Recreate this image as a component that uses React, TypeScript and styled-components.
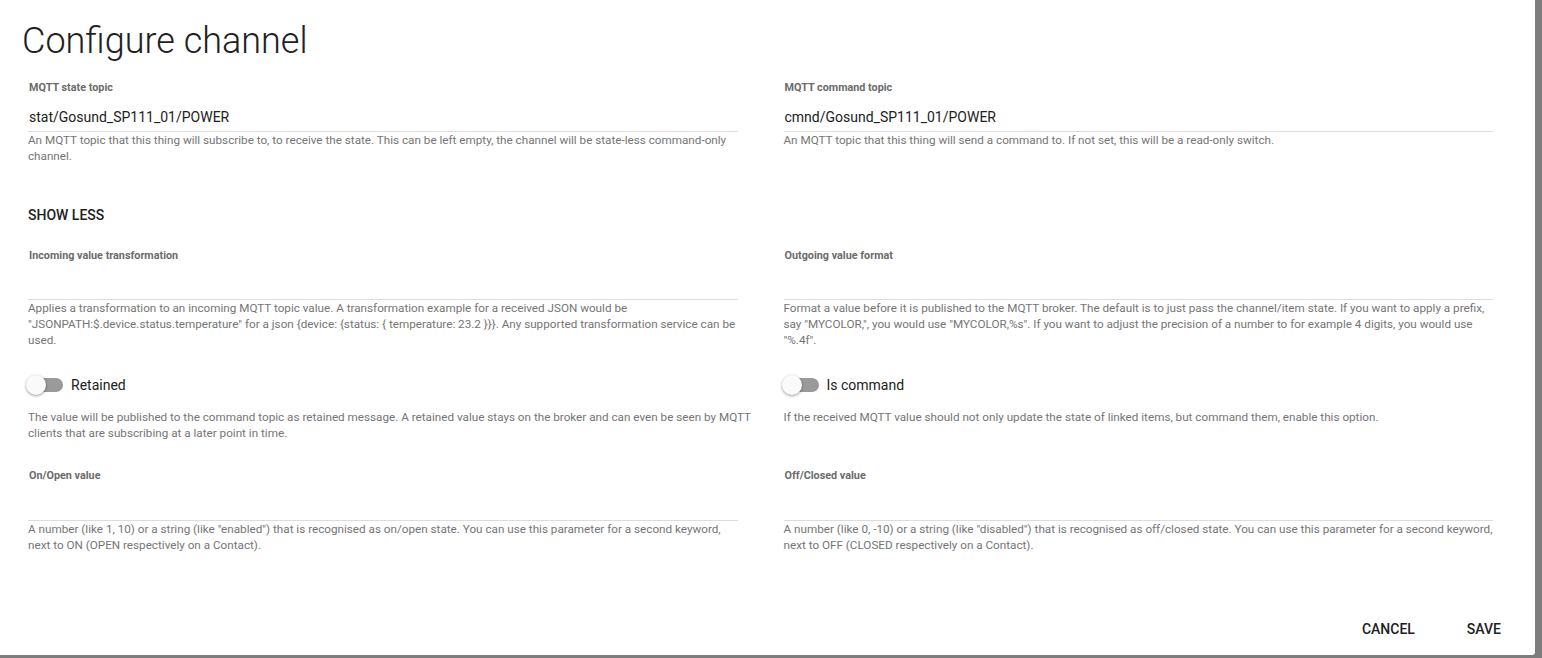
import React from "react";
import styled, { createGlobalStyle } from "styled-components";

const Global = createGlobalStyle`
  html, body { margin: 0; padding: 0; background: #7d7d7d; }
  body { font-family: Roboto, "Noto Sans", Arial, sans-serif; overflow: hidden; }
  * { box-sizing: border-box; }
`;

const Dialog = styled.div`
  width: 1535px;
  height: 655px;
  background: #fff;
  border-radius: 0 0 3px 0;
  display: flex;
  flex-direction: column;
`;

const Title = styled.h1`
  margin: 0;
  padding: 18px 0 0 22px;
  height: 76px;
  font-size: 36px;
  font-weight: 300;
  color: #212121;
  line-height: 46px;
`;

const Body = styled.div`
  padding: 0 42px 0 28px;
  flex: 1;
`;

const Grid = styled.div`
  display: grid;
  grid-template-columns: minmax(0, 1fr) minmax(0, 1fr);
  column-gap: 46px;
`;

const Field = styled.div<{ $h: number }>`
  height: ${(p) => p.$h}px;
  display: flex;
  flex-direction: column;
  min-width: 0;
`;

const Label = styled.div`
  font-size: 10.8px;
  font-weight: 700;
  color: #6b6b6b;
  line-height: 12px;
  height: 12px;
  margin-top: 6px;
  padding-left: 1px;
`;

const Input = styled.div<{ $h: number }>`
  height: ${(p) => p.$h}px;
  border-bottom: 1px solid #dcdcdc;
  font-size: 14px;
  color: #212121;
  display: flex;
  align-items: flex-end;
  padding-bottom: 6px;
  padding-left: 1px;
`;

const Desc = styled.div<{ $pr?: number }>`
  font-size: 11.7px;
  line-height: 16px;
  color: #757575;
  padding-right: ${(p) => p.$pr ?? 0}px;
`;

const ShowLess = styled.div`
  height: 38px;
  display: flex;
  align-items: center;
  font-size: 14px;
  font-weight: 500;
  color: #212121;
  margin-bottom: 10px;
`;

const ToggleRow = styled.div`
  display: flex;
  align-items: center;
  height: 30px;
`;

const Track = styled.div`
  position: relative;
  width: 34px;
  height: 14px;
  border-radius: 7px;
  background: #9a9a9a;
  margin-left: 1px;
`;

const Thumb = styled.div`
  position: absolute;
  left: -3px;
  top: -3px;
  width: 20px;
  height: 20px;
  border-radius: 50%;
  background: #fafafa;
  box-shadow: 0 1px 3px rgba(0, 0, 0, 0.4);
`;

const ToggleLabel = styled.span`
  margin-left: 8px;
  font-size: 14px;
  color: #212121;
`;

const ToggleBlock = styled.div`
  height: 94px;
  display: flex;
  flex-direction: column;
  margin-right: -16px;
`;

const ToggleDesc = styled(Desc)`
  margin-top: 9px;
`;

const Actions = styled.div`
  display: flex;
  justify-content: flex-end;
  align-items: center;
  padding: 0 22px 8px 0;
`;

const Button = styled.button`
  background: none;
  border: none;
  font-family: inherit;
  font-size: 14px;
  font-weight: 500;
  color: #212121;
  padding: 0 12px;
  height: 36px;
  margin-left: 28px;
  cursor: pointer;
`;

const Toggle = ({ label }: { label: string }) => (
  <ToggleRow>
    <Track>
      <Thumb />
    </Track>
    <ToggleLabel>{label}</ToggleLabel>
  </ToggleRow>
);

const incomingText =
  'Applies a transformation to an incoming MQTT topic value. A transformation example for a received JSON would be "JSONPATH:$.device.status.temperature" for a json {device: {status: { temperature: 23.2 }}}. Any supported transformation service can be used.';

const outgoingText =
  'Format a value before it is published to the MQTT broker. The default is to just pass the channel/item state. If you want to apply a prefix, say "MYCOLOR,", you would use "MYCOLOR,%s". If you want to adjust the precision of a number to for example 4 digits, you would use "%.4f".';

export default function App() {
  return (
    <>
      <Global />
      <Dialog>
        <Title>Configure channel</Title>
        <Body>
          <Grid>
            <Field $h={120}>
              <Label>MQTT state topic</Label>
              <Input $h={38}>stat/Gosund_SP111_01/POWER</Input>
              <Desc>
                An MQTT topic that this thing will subscribe to, to receive the state. This can be left empty, the channel will be state-less command-only channel.
              </Desc>
            </Field>
            <Field $h={120}>
              <Label>MQTT command topic</Label>
              <Input $h={38}>cmnd/Gosund_SP111_01/POWER</Input>
              <Desc>An MQTT topic that this thing will send a command to. If not set, this will be a read-only switch.</Desc>
            </Field>
          </Grid>
          <ShowLess>SHOW LESS</ShowLess>
          <Grid>
            <Field $h={126}>
              <Label>Incoming value transformation</Label>
              <Input $h={38}></Input>
              <Desc>{incomingText}</Desc>
            </Field>
            <Field $h={126}>
              <Label>Outgoing value format</Label>
              <Input $h={38}></Input>
              <Desc $pr={4}>{outgoingText}</Desc>
            </Field>
            <ToggleBlock>
              <Toggle label="Retained" />
              <ToggleDesc>
                The value will be published to the command topic as retained message. A retained value stays on the broker and can even be seen by MQTT clients that are subscribing at a later point in time.
              </ToggleDesc>
            </ToggleBlock>
            <ToggleBlock>
              <Toggle label="Is command" />
              <ToggleDesc>
                If the received MQTT value should not only update the state of linked items, but command them, enable this option.
              </ToggleDesc>
            </ToggleBlock>
            <Field $h={110}>
              <Label>On/Open value</Label>
              <Input $h={39}></Input>
              <Desc>
                A number (like 1, 10) or a string (like "enabled") that is recognised as on/open state. You can use this parameter for a second keyword, next to ON (OPEN respectively on a Contact).
              </Desc>
            </Field>
            <Field $h={110}>
              <Label>Off/Closed value</Label>
              <Input $h={39}></Input>
              <Desc>
                A number (like 0, -10) or a string (like "disabled") that is recognised as off/closed state. You can use this parameter for a second keyword, next to OFF (CLOSED respectively on a Contact).
              </Desc>
            </Field>
          </Grid>
        </Body>
        <Actions>
          <Button>CANCEL</Button>
          <Button>SAVE</Button>
        </Actions>
      </Dialog>
    </>
  );
}
